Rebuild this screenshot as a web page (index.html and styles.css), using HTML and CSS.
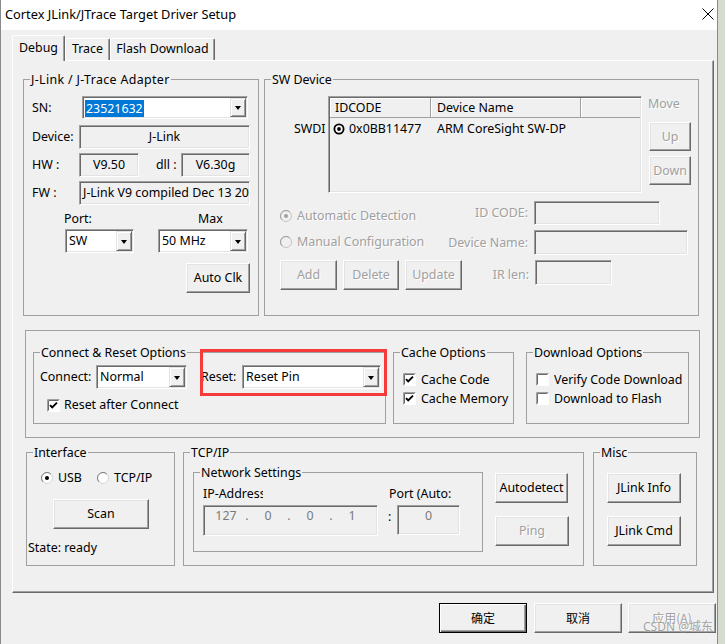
FILE: index.html
```html
<!DOCTYPE html>
<html lang="en">
<head>
<meta charset="utf-8">
<title>Cortex JLink/JTrace Target Driver Setup</title>
<link rel="stylesheet" href="styles.css">
</head>
<body>
<div class="window">
  <div class="titlebar">
    <span class="title">Cortex JLink/JTrace Target Driver Setup</span>
    <svg class="close" width="12" height="12" viewBox="0 0 12 12"><path d="M0.5 0.5L11.5 11.5M11.5 0.5L0.5 11.5" stroke="#000" stroke-width="1" fill="none"/></svg>
  </div>
  <div class="client">
    <div class="tabs">
      <div class="tab active t-debug">Debug</div>
      <div class="tab t-trace">Trace</div>
      <div class="tab t-flash">Flash Download</div>
    </div>
    <div class="page">
      <div class="top-row">
        <fieldset class="group adapter">
          <legend class="wide-legend">J-Link / J-Trace Adapter</legend>
          <div class="a-row a-sn">
            <span class="a-lbl sn-lbl">SN:</span>
            <div class="combo c-sn"><span class="val"><span class="sel">23521632</span></span><span class="drop"></span></div>
          </div>
          <div class="a-row a-dev">
            <span class="a-lbl">Device:</span>
            <div class="field f-dev center">J-Link</div>
          </div>
          <div class="a-row a-hw">
            <span class="a-lbl">HW :</span>
            <div class="field f-hw center">V9.50</div>
            <span class="dll-lbl">dll :</span>
            <div class="field f-dll center">V6.30g</div>
          </div>
          <div class="a-row a-fw">
            <span class="a-lbl">FW :</span>
            <div class="field f-fw">J-Link V9 compiled Dec 13 2017 10:29:25</div>
          </div>
          <div class="a-row a-portlbl"><span class="port-lbl">Port:</span><span class="max-lbl">Max</span></div>
          <div class="a-row a-port">
            <div class="combo c-port"><span class="val">SW</span><span class="drop"></span></div>
            <div class="combo c-max"><span class="val">50 MHz</span><span class="drop"></span></div>
          </div>
          <div class="a-row a-auto"><button class="btn b-autoclk">Auto Clk</button></div>
        </fieldset>

        <fieldset class="group swdev">
          <legend>SW Device</legend>
          <div class="sw-top">
            <span class="swdi">SWDI</span>
            <div class="listview">
              <div class="lv-head"><span class="lv-h1">IDCODE</span><span class="lv-h2">Device Name</span><span class="lv-h3"></span></div>
              <div class="lv-row">
                <span class="lv-c1"><svg class="ring" width="12" height="12" viewBox="0 0 12 12"><circle cx="6" cy="6" r="4.6" fill="#fff" stroke="#000" stroke-width="1.8"/><circle cx="6" cy="6" r="1.9" fill="#000"/></svg>0x0BB11477</span>
                <span class="lv-c2">ARM CoreSight SW-DP</span>
              </div>
            </div>
            <div class="move">
              <span class="move-lbl dis">Move</span>
              <button class="btn dis b-up">Up</button>
              <button class="btn dis b-down">Down</button>
            </div>
          </div>
          <div class="sw-row r1">
            <span class="radio-item dis sw-radio"><svg class="rb" width="12" height="12" viewBox="0 0 12 12"><circle cx="6" cy="6" r="5.5" fill="#f0f0f0" stroke="#c4c4c4"/><path d="M2.1 9.9A5.5 5.5 0 0 1 9.9 2.1" fill="none" stroke="#a0a0a0"/><circle cx="6" cy="6" r="2" fill="#a0a0a0"/></svg>Automatic Detection</span>
            <span class="sw-lbl dis">ID CODE:</span>
            <span class="field f-idcode"></span>
          </div>
          <div class="sw-row r2">
            <span class="radio-item dis sw-radio"><svg class="rb" width="12" height="12" viewBox="0 0 12 12"><circle cx="6" cy="6" r="5.5" fill="#f0f0f0" stroke="#c4c4c4"/><path d="M2.1 9.9A5.5 5.5 0 0 1 9.9 2.1" fill="none" stroke="#a0a0a0"/></svg>Manual Configuration</span>
            <span class="sw-lbl dis">Device Name:</span>
            <span class="field f-devname"></span>
          </div>
          <div class="sw-row r3">
            <div class="sw-btns">
              <button class="btn dis b-add">Add</button>
              <button class="btn dis b-del">Delete</button>
              <button class="btn dis b-upd">Update</button>
            </div>
            <span class="sw-lbl ir-lbl dis">IR len:</span>
            <span class="field f-irlen"></span>
          </div>
        </fieldset>
      </div>

      <div class="mid-box">
        <fieldset class="group g-connect">
          <legend>Connect &amp; Reset Options</legend>
          <div class="c-row">
            <span class="c-lbl">Connect:</span>
            <div class="combo c-normal"><span class="val">Normal</span><span class="drop"></span></div>
            <span class="r-lbl">Reset:</span>
            <div class="combo c-reset"><span class="val">Reset Pin</span><span class="drop"></span></div>
          </div>
          <div class="chk-item c-rac"><svg class="cb" width="13" height="13" viewBox="0 0 13 13"><rect x="0" y="0" width="13" height="13" fill="#fff"/><path d="M0.5 12.5V0.5H12.5" fill="none" stroke="#a0a0a0"/><path d="M1.5 11.5V1.5H11.5" fill="none" stroke="#696969"/><path d="M3 6.2L5.2 8.4L10 3.6" fill="none" stroke="#000" stroke-width="1.9"/></svg><span>Reset after Connect</span></div>
        </fieldset>
        <fieldset class="group g-cache">
          <legend>Cache Options</legend>
          <div class="chk-item chk-first"><svg class="cb" width="13" height="13" viewBox="0 0 13 13"><rect x="0" y="0" width="13" height="13" fill="#fff"/><path d="M0.5 12.5V0.5H12.5" fill="none" stroke="#a0a0a0"/><path d="M1.5 11.5V1.5H11.5" fill="none" stroke="#696969"/><path d="M3 6.2L5.2 8.4L10 3.6" fill="none" stroke="#000" stroke-width="1.9"/></svg><span>Cache Code</span></div>
          <div class="chk-item"><svg class="cb" width="13" height="13" viewBox="0 0 13 13"><rect x="0" y="0" width="13" height="13" fill="#fff"/><path d="M0.5 12.5V0.5H12.5" fill="none" stroke="#a0a0a0"/><path d="M1.5 11.5V1.5H11.5" fill="none" stroke="#696969"/><path d="M3 6.2L5.2 8.4L10 3.6" fill="none" stroke="#000" stroke-width="1.9"/></svg><span>Cache Memory</span></div>
        </fieldset>
        <fieldset class="group g-download">
          <legend>Download Options</legend>
          <div class="chk-item chk-first"><svg class="cb" width="13" height="13" viewBox="0 0 13 13"><rect x="0" y="0" width="13" height="13" fill="#fff"/><path d="M0.5 12.5V0.5H12.5" fill="none" stroke="#a0a0a0"/><path d="M1.5 11.5V1.5H11.5" fill="none" stroke="#696969"/></svg><span class="clip-txt">Verify Code Download</span></div>
          <div class="chk-item"><svg class="cb" width="13" height="13" viewBox="0 0 13 13"><rect x="0" y="0" width="13" height="13" fill="#fff"/><path d="M0.5 12.5V0.5H12.5" fill="none" stroke="#a0a0a0"/><path d="M1.5 11.5V1.5H11.5" fill="none" stroke="#696969"/></svg><span>Download to Flash</span></div>
        </fieldset>
        <div class="redbox"></div>
      </div>

      <div class="bottom-row">
        <fieldset class="group g-iface">
          <legend>Interface</legend>
          <div class="if-radios">
            <span class="radio-item ri-usb"><svg class="rb" width="12" height="12" viewBox="0 0 12 12"><circle cx="6" cy="6" r="5.5" fill="#fff" stroke="#d4d4d4"/><path d="M2.1 9.9A5.5 5.5 0 0 1 9.9 2.1" fill="none" stroke="#808080"/><circle cx="6" cy="6" r="2" fill="#000"/></svg>USB</span>
            <span class="radio-item"><svg class="rb" width="12" height="12" viewBox="0 0 12 12"><circle cx="6" cy="6" r="5.5" fill="#fff" stroke="#d4d4d4"/><path d="M2.1 9.9A5.5 5.5 0 0 1 9.9 2.1" fill="none" stroke="#808080"/></svg>TCP/IP</span>
          </div>
          <button class="btn b-scan">Scan</button>
          <div class="state">State: ready</div>
        </fieldset>
        <fieldset class="group g-tcp">
          <legend>TCP/IP</legend>
          <div class="tcp-inner">
            <fieldset class="group g-net">
              <legend>Network Settings</legend>
              <div class="net-lbls"><span class="ip-lbl">IP-Address:</span><span class="port-lbl2">Port (Auto:</span></div>
              <div class="net-fields">
                <div class="field ip-field"><span class="oct">127</span><span class="dot">.</span><span class="oct">0</span><span class="dot">.</span><span class="oct">0</span><span class="dot">.</span><span class="oct">1</span></div>
                <span class="colon">:</span>
                <div class="field port-field">0</div>
              </div>
            </fieldset>
            <div class="tcp-btns">
              <button class="btn b-auto">Autodetect</button>
              <button class="btn dis b-ping">Ping</button>
            </div>
          </div>
        </fieldset>
        <fieldset class="group g-misc">
          <legend>Misc</legend>
          <button class="btn misc-btn">JLink Info</button>
          <button class="btn misc-btn">JLink Cmd</button>
        </fieldset>
      </div>
    </div>
    <div class="dlg-buttons">
      <button class="btn default b-ok">确定</button>
      <button class="btn b-cancel">取消</button>
      <button class="btn dis b-apply">应用(A)</button>
    </div>
  </div>
  <div class="watermark">CSDN @城东</div>
</div>
</body>
</html>
```

FILE: styles.css
```css
* { box-sizing: border-box; }
html, body { margin: 0; padding: 0; }
body {
  width: 725px; height: 644px; overflow: hidden;
  background: #d3dccf;
  font-family: "Noto Sans", "Noto Sans CJK SC", sans-serif;
  font-size: 12.4px; line-height: 16px; color: #000;
}
.window {
  position: relative;
  width: 718px; height: 644px;
  background: #f0f0f0;
  border-left: 1px solid #8a8a8a;
  border-right: 1px solid #8a8a8a;
}
.titlebar {
  height: 30px; background: #fff;
  display: flex; align-items: center; justify-content: space-between;
  padding: 0 3px 3px 4px;
}
.title { font-size: 12.8px; }
.close { display: block; }
.client { padding: 5px 0 0 11px; }

/* tabs */
.tabs { display: flex; align-items: flex-end; height: 25px; position: relative; z-index: 1; }
.tab {
  height: 22px; line-height: 20px; text-align: center;
  background: #f0f0f0;
  border-top: 1px solid #fff; border-left: 1px solid #fff; border-right: 1px solid #696969;
  box-shadow: inset -1px 0 #a0a0a0;
  border-radius: 2px 2px 0 0;
}
.tab.active { height: 26px; margin-bottom: -1px; line-height: 24px; }
.t-debug { width: 53px; }
.t-trace { width: 45px; }
.t-flash { width: 105px; }

.page {
  width: 702px; height: 533px;
  border: 1px solid; border-color: #fff #696969 #696969 #fff;
  box-shadow: inset -1px -1px #a0a0a0;
  padding: 11px 0 0 10px;
  display: flex; flex-direction: column; align-items: flex-start;
}

/* group boxes */
.group { margin: 0; padding: 0; border: 1px solid #a0a0a0; min-width: 0; }
.group > legend { margin-left: 6px; padding: 0 1px; line-height: 15px; height: 15px; white-space: nowrap; }
.group > legend.wide-legend { letter-spacing: 0.35px; }

.dis { color: #a0a0a0; text-shadow: 1px 1px 0 #fff; }

/* controls */
.combo {
  display: flex; height: 23px; background: #fff;
  border: 1px solid; border-color: #a0a0a0 #fff #fff #a0a0a0;
  box-shadow: inset 1px 1px #696969, inset -1px -1px #e3e3e3;
  padding: 1px;
}
.combo .val { flex: 1; padding-left: 2px; line-height: 19px; overflow: hidden; white-space: nowrap; }
.combo .drop {
  width: 16px; background: #f0f0f0;
  border: 1px solid; border-color: #e3e3e3 #696969 #696969 #e3e3e3;
  box-shadow: inset 1px 1px #fff, inset -1px -1px #a0a0a0;
  display: flex; align-items: center; justify-content: center;
}
.combo .drop::after {
  content: ""; width: 0; height: 0;
  border-left: 3px solid transparent; border-right: 3px solid transparent; border-top: 4px solid #000;
  margin-top: 1px;
}
.c-sn .val { padding-left: 1px; padding-top: 1px; }
.sel { display: inline-block; background: #0078d7; color: #fff; padding: 0 1px; line-height: 17px; }

.field {
  border: 1px solid; border-color: #a0a0a0 #fff #fff #a0a0a0;
  box-shadow: inset 1px 1px #696969, inset -1px -1px #e3e3e3;
  background: #f0f0f0; padding: 0 3px;
  white-space: nowrap; overflow: hidden;
  display: flex; align-items: center;
}
.field.center { justify-content: center; }

.btn {
  font: inherit; color: #000; background: #f0f0f0;
  border: 1px solid; border-color: #fff #696969 #696969 #fff;
  box-shadow: inset -1px -1px #a0a0a0, inset 1px 1px #e3e3e3;
  padding: 0; margin: 0; line-height: 16px;
  display: flex; align-items: center; justify-content: center;
}
.btn.dis { color: #a0a0a0; }
.btn.default {
  border-color: #000;
  box-shadow: inset 1px 1px #fff, inset -1px -1px #696969, inset -2px -2px #a0a0a0;
}

.radio-item, .chk-item { display: flex; align-items: center; white-space: nowrap; }
.rb { flex: none; margin-right: 5px; }
.cb { flex: none; margin-right: 5px; display: block; }

/* adapter */
.top-row { display: flex; gap: 5px; }
.adapter { width: 236px; height: 244px; }
.a-row { display: flex; align-items: center; padding-left: 8px; }
.a-lbl { width: 47px; white-space: nowrap; }
.sn-lbl { width: 50px; }
.a-sn { margin-top: 9px; height: 23px; }
.c-sn { width: 166px; }
.a-dev { margin-top: 6px; height: 24px; }
.f-dev { width: 171px; height: 24px; }
.a-hw { margin-top: 4px; height: 24px; }
.f-hw { width: 60px; height: 24px; }
.dll-lbl { margin-left: 17px; width: 25px; white-space: nowrap; }
.f-dll { width: 69px; height: 24px; }
.a-fw { margin-top: 4px; height: 24px; }
.f-fw { width: 171px; height: 24px; padding-left: 3px; }
.a-portlbl { margin-top: 6px; height: 16px; }
.port-lbl { margin-left: 32px; width: 134px; }
.a-port { margin-top: 2px; height: 24px; }
.c-port { margin-left: 33px; width: 69px; height: 24px; }
.c-max { margin-left: 24px; width: 90px; height: 24px; }
.a-auto { margin-top: 10px; }
.b-autoclk { margin-left: 154px; width: 64px; height: 30px; }

/* sw device */
.swdev { width: 435px; height: 244px; }
.sw-top { display: flex; align-items: flex-start; margin-top: 9px; }
.swdi { width: 63px; padding-left: 29px; margin-top: 25px; }
.listview {
  width: 314px; height: 97px; background: #f0f0f0;
  border: 1px solid; border-color: #a0a0a0 #fff #fff #a0a0a0;
  box-shadow: inset 1px 1px #696969, inset -1px -1px #e3e3e3;
  padding: 1px;
}
.lv-head { display: flex; height: 20px; line-height: 19px; }
.lv-head span { border-right: 1px solid #a0a0a0; border-bottom: 1px solid #a0a0a0; box-shadow: inset 1px 1px #fff; }
.lv-h1 { width: 101px; padding-left: 5px; }
.lv-h2 { width: 150px; padding-left: 6px; }
.lv-h3 { flex: 1; border-right: none !important; }
.lv-row { display: flex; height: 22px; align-items: center; }
.lv-c1 { width: 101px; padding-left: 3px; display: flex; align-items: center; }
.ring { margin-right: 4px; }
.lv-c2 { padding-left: 6px; }
.move { margin-left: 6px; display: flex; flex-direction: column; align-items: flex-start; }
.b-up { margin: 10px 0 0 1px; width: 42px; height: 29px; }
.b-down { margin: 5px 0 0 1px; width: 42px; height: 29px; }

.sw-row { display: flex; align-items: center; padding-left: 15px; }
.r1 { margin-top: 8px; height: 24px; }
.r2 { margin-top: 5px; height: 25px; }
.r3 { margin-top: 5px; height: 30px; }
.sw-radio { width: 150px; }
.r1 .sw-radio { margin-top: 5px; }
.r2 .sw-radio { margin-bottom: 1px; }
.sw-lbl { width: 104px; text-align: right; padding-right: 6px; white-space: nowrap; }
.ir-lbl { width: 73px; }
.f-idcode { width: 126px; height: 24px; }
.f-devname { width: 154px; height: 25px; }
.f-irlen { width: 77px; height: 25px; align-self: flex-start; }
.sw-btns { display: flex; gap: 6px; }
.b-add { width: 57px; height: 30px; }
.b-del { width: 56px; height: 30px; }
.b-upd { width: 57px; height: 30px; }

/* middle */
.mid-box {
  position: relative;
  margin: 14px 0 0 2px; width: 675px; height: 108px;
  border: 1px solid #a0a0a0;
  padding: 14px 0 0 7px;
  display: flex; align-items: flex-start;
}
.g-connect { width: 353px; height: 79px; }
.c-row { display: flex; align-items: center; margin-top: 5px; height: 24px; padding-left: 6px; }
.c-lbl { width: 56px; }
.c-normal { width: 91px; height: 24px; }
.r-lbl { margin-left: 14px; width: 41px; }
.c-reset { width: 139px; height: 24px; }
.c-rac { margin-top: 8px; padding-left: 13px; height: 16px; }
.c-rac .cb { margin-right: 4px; }
.g-cache { width: 121px; height: 79px; margin-left: 7px; }
.g-download { width: 163px; height: 79px; margin-left: 12px; }
.g-cache .chk-item, .g-download .chk-item { height: 19px; padding-left: 9px; }
.chk-first { margin-top: 10px; }
.clip-txt { width: 130px; overflow: hidden; }
.redbox {
  position: absolute; left: 174px; top: 18px;
  width: 187px; height: 47px;
  border: 3px solid #f63a3a;
}

/* bottom */
.bottom-row { display: flex; align-items: flex-start; margin: 7px 0 0 3px; }
.g-iface { width: 149px; height: 121px; }
.if-radios { display: flex; align-items: center; margin-top: 10px; padding-left: 14px; height: 16px; }
.ri-usb { width: 56px; }
.b-scan { margin: 13px 0 0 26px; width: 96px; height: 30px; }
.state { margin-top: 11px; padding-left: 1px; }
.g-tcp { width: 401px; height: 121px; margin-left: 8px; }
.tcp-inner { display: flex; align-items: flex-start; }
.g-net { margin: 5px 0 0 9px; width: 290px; height: 87px; }
.net-lbls { display: flex; margin-top: 6px; padding-left: 9px; height: 16px; }
.ip-lbl { width: 60px; overflow: hidden; white-space: nowrap; }
.port-lbl2 { margin-left: 126px; white-space: nowrap; }
.net-fields { display: flex; align-items: flex-start; margin-top: 3px; padding-left: 9px; }
.ip-field { width: 175px; height: 31px; padding: 0 0 0 7px; align-items: flex-start; padding-top: 2px; color: #7a7a7a; }
.oct { width: 30px; text-align: center; line-height: 16px; }
.dot { width: 12px; text-align: center; line-height: 16px; }
.colon { width: 19px; padding-left: 10px; margin-top: 4px; }
.port-field { width: 63px; height: 30px; justify-content: center; align-items: flex-start; padding-top: 2px; color: #7a7a7a; }
.tcp-btns { margin: 13px 0 0 12px; display: flex; flex-direction: column; }
.b-auto { width: 73px; height: 30px; }
.b-ping { margin-top: 13px; width: 74px; height: 30px; }
.g-misc { width: 104px; height: 121px; margin-left: 9px; }
.misc-btn { margin: 13px 0 0 13px; width: 74px; height: 30px; }

/* dialog buttons */
.dlg-buttons { display: flex; margin: 10px 0 0 427px; }
.dlg-buttons .btn { width: 88px; height: 30px; font-family: "Noto Sans CJK SC", sans-serif; font-size: 12px; }
.b-cancel { margin-left: 7px; }
.b-apply { margin-left: 6px; }

.watermark {
  position: absolute; left: 642px; top: 619px;
  font-family: "Noto Sans", "Noto Sans CJK SC", sans-serif;
  font-size: 12px; line-height: 16px;
  color: rgba(130, 130, 130, 0.75);
  text-shadow: 0 0 1px #fff;
}
```
